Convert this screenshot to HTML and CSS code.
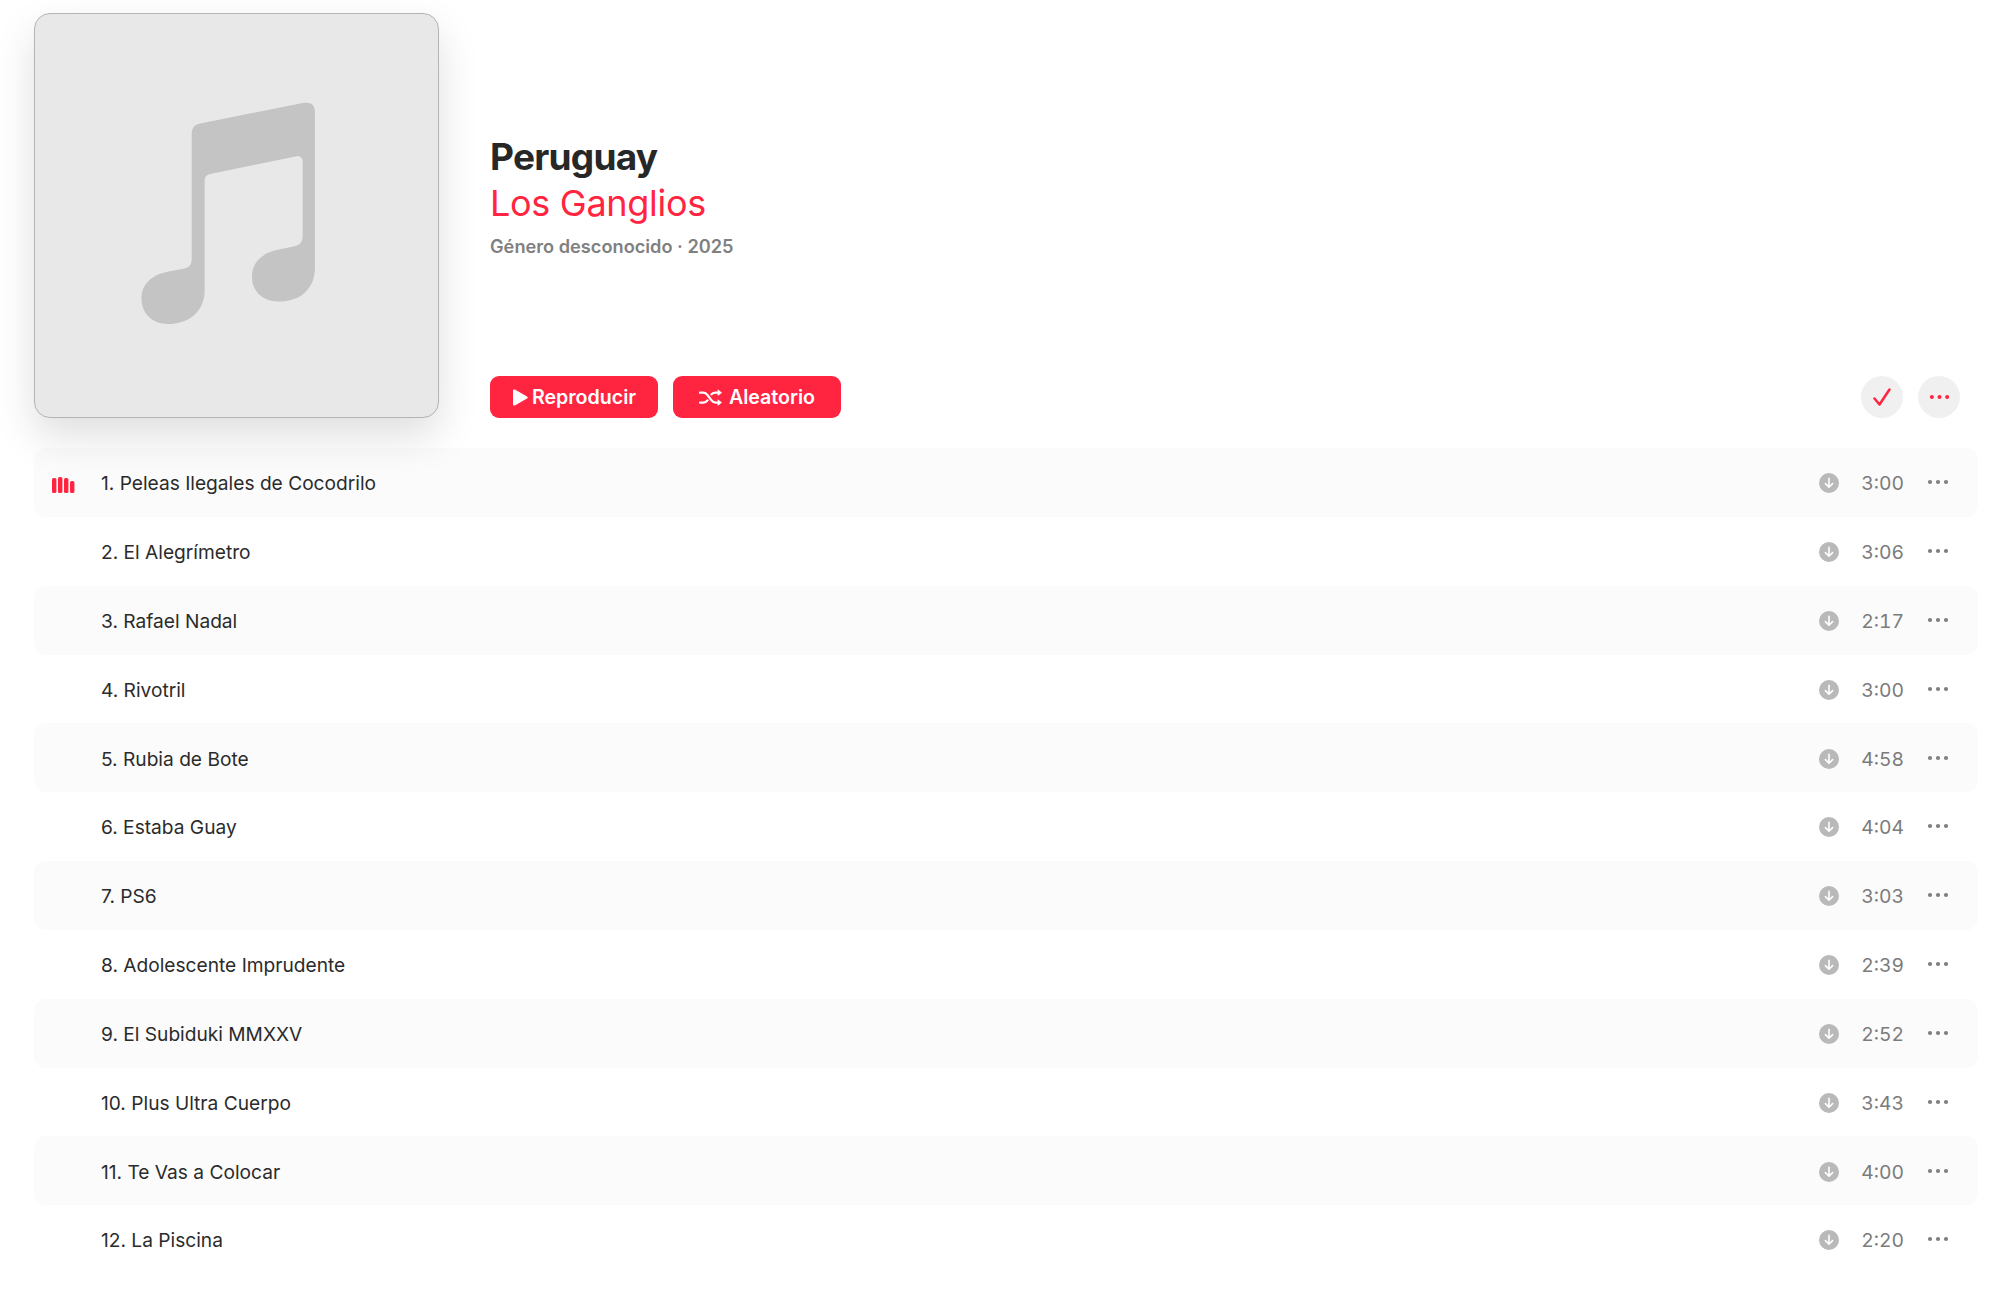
FILE: index.html
```html
<!DOCTYPE html>
<html lang="es">
<head>
<meta charset="utf-8">
<title>Peruguay</title>
<link rel="stylesheet" href="styles.css">
</head>
<body>
<svg class="defs" width="0" height="0" aria-hidden="true">
  <symbol id="dl" viewBox="0 0 20 20"><circle cx="10" cy="10" r="10" fill="#b9b9b9"/><path d="M10 5.2V14M6.4 10.6 10 14.2l3.6-3.6" fill="none" stroke="#fff" stroke-width="1.6" stroke-linecap="round" stroke-linejoin="round"/></symbol>
  <symbol id="dots" viewBox="0 0 22 6"><circle cx="3" cy="3" r="2.1"/><circle cx="11" cy="3" r="2.1"/><circle cx="19" cy="3" r="2.1"/></symbol>
</svg>
<main class="page">
  <header class="head">
    <div class="art">
      <svg class="note" viewBox="34 13 405 405"><path d="M200 123 303 102.5C311 101 315.3 104 315.3 111V268C315.3 290 300 302 279 302 262 302 252 291 252 277 252 262 263 253 278 250L295 246.5C300 245 303 242 303 236V161C303 157 300 155.5 297 156L209 174C206 175 204.5 177 204.5 180V290C204.5 312 189 324.5 167 324.5 150 324.5 141 312 141 299 141 284 152 275 167 272L183 269C189 268 191.5 265 191.5 259V133C191.5 128 194 124 200 123Z"/></svg>
    </div>
    <div class="info">
      <div class="titles">
        <h1 class="title">Peruguay</h1>
        <h2 class="artist">Los Ganglios</h2>
        <p class="meta">Género desconocido · 2025</p>
      </div>
      <div class="actions">
        <button class="btn btn-play"><svg class="ico-play" viewBox="0 0 16 17"><path d="M1 1.6C1 .6 2 .1 2.9.6L15 7.4c.9.5.9 1.7 0 2.2L2.9 16.4C2 16.9 1 16.4 1 15.4Z"/></svg>Reproducir</button>
        <button class="btn btn-shuffle"><svg class="ico-shuffle" viewBox="0 0 24 17"><path d="M1 3.5h3.5c2 0 3.2.8 4.4 2.5l4.2 5.5c1.2 1.6 2.4 2.3 4.4 2.3H20M1 13.8h3.5c2 0 3.2-.8 4.4-2.3M13.1 5.2c1.2-1.3 2.4-1.7 4.4-1.7H20" fill="none" stroke="#fff" stroke-width="2.4" stroke-linecap="round"/><path d="M19.5 0 24 3.5 19.5 7ZM19.5 10.3l4.5 3.5-4.5 3.5Z" fill="#fff"/></svg>Aleatorio</button>
        <span class="spacer"></span>
        <span class="round"><svg class="ico-check" viewBox="0 0 18 18"><path d="M1.5 10.5 6.5 16.5 16.5 1.5" fill="none" stroke="#ff2440" stroke-width="2.5" stroke-linecap="round" stroke-linejoin="round"/></svg></span>
        <span class="round round-dots"><svg class="ico-dots"><use href="#dots"/></svg></span>
      </div>
    </div>
  </header>
  <ol class="tracks">
    <li class="track"><span class="lead"><svg class="bars" viewBox="0 0 23 16"><rect x="0" y="1" width="4.4" height="15" rx="1.6"/><rect x="6" y="0" width="4.4" height="16" rx="1.6"/><rect x="12" y="1" width="4.4" height="15" rx="1.6"/><rect x="18" y="4" width="4.4" height="12" rx="1.6"/></svg></span><span class="name">1. Peleas Ilegales de Cocodrilo</span><svg class="dl"><use href="#dl"/></svg><span class="time">3:00</span><svg class="more"><use href="#dots"/></svg></li>
    <li class="track"><span class="lead"></span><span class="name">2. El Alegrímetro</span><svg class="dl"><use href="#dl"/></svg><span class="time">3:06</span><svg class="more"><use href="#dots"/></svg></li>
    <li class="track"><span class="lead"></span><span class="name">3. Rafael Nadal</span><svg class="dl"><use href="#dl"/></svg><span class="time">2:17</span><svg class="more"><use href="#dots"/></svg></li>
    <li class="track"><span class="lead"></span><span class="name">4. Rivotril</span><svg class="dl"><use href="#dl"/></svg><span class="time">3:00</span><svg class="more"><use href="#dots"/></svg></li>
    <li class="track"><span class="lead"></span><span class="name">5. Rubia de Bote</span><svg class="dl"><use href="#dl"/></svg><span class="time">4:58</span><svg class="more"><use href="#dots"/></svg></li>
    <li class="track"><span class="lead"></span><span class="name">6. Estaba Guay</span><svg class="dl"><use href="#dl"/></svg><span class="time">4:04</span><svg class="more"><use href="#dots"/></svg></li>
    <li class="track"><span class="lead"></span><span class="name">7. PS6</span><svg class="dl"><use href="#dl"/></svg><span class="time">3:03</span><svg class="more"><use href="#dots"/></svg></li>
    <li class="track"><span class="lead"></span><span class="name">8. Adolescente Imprudente</span><svg class="dl"><use href="#dl"/></svg><span class="time">2:39</span><svg class="more"><use href="#dots"/></svg></li>
    <li class="track"><span class="lead"></span><span class="name">9. El Subiduki MMXXV</span><svg class="dl"><use href="#dl"/></svg><span class="time">2:52</span><svg class="more"><use href="#dots"/></svg></li>
    <li class="track"><span class="lead"></span><span class="name">10. Plus Ultra Cuerpo</span><svg class="dl"><use href="#dl"/></svg><span class="time">3:43</span><svg class="more"><use href="#dots"/></svg></li>
    <li class="track"><span class="lead"></span><span class="name">11. Te Vas a Colocar</span><svg class="dl"><use href="#dl"/></svg><span class="time">4:00</span><svg class="more"><use href="#dots"/></svg></li>
    <li class="track"><span class="lead"></span><span class="name">12. La Piscina</span><svg class="dl"><use href="#dl"/></svg><span class="time">2:20</span><svg class="more"><use href="#dots"/></svg></li>
  </ol>
</main>
</body>
</html>
```
FILE: styles.css
```css
* { box-sizing: border-box; }
html, body { margin: 0; background: #fff; }
body { font-family: Inter, "Liberation Sans", sans-serif; color: #2b2b2b; height: 1290px; overflow: hidden; }
.defs { position: absolute; }
.page { padding: 13px 21px 0 34px; }
.head { display: flex; gap: 51px; padding-right: 18px; }
.art { flex: none; width: 405px; height: 405px; background: #e8e8e8; border: 1px solid #b4b4b4; border-radius: 16px; box-shadow: 0 18px 40px rgba(0,0,0,.13); overflow: hidden; }
.note { display: block; width: 100%; height: 100%; fill: #c4c4c4; }
.info { flex: 1; display: flex; flex-direction: column; justify-content: space-between; }
.titles { padding-top: 121px; }
.title { margin: 0; font-size: 37px; line-height: 46px; font-weight: 700; letter-spacing: -.75px; color: #272727; }
.artist { margin: 0; font-size: 36px; line-height: 46px; font-weight: 400; letter-spacing: -.3px; color: #ff2440; }
.meta { margin: 8px 0 0; font-size: 18.2px; line-height: 24px; font-weight: 600; color: #808080; }
.actions { display: flex; align-items: center; gap: 15px; }
.spacer { flex: 1; }
.btn { display: flex; align-items: center; justify-content: center; width: 168px; height: 42px; border: 0; border-radius: 9px; background: #ff2440; color: #fff; font: 600 19.6px Inter, sans-serif; padding: 0; }
.ico-play { width: 16px; height: 17px; fill: #fff; margin-right: 4px; }
.ico-shuffle { width: 23px; height: 17px; margin-right: 7px; }
.round { display: flex; align-items: center; justify-content: center; width: 42px; height: 42px; border-radius: 50%; background: #f0f0f0; }
.ico-check { width: 18px; height: 18px; }
.ico-dots { width: 21px; height: 6px; fill: #ff2440; }
.tracks { list-style: none; margin: 30px 0 0; padding: 0; }
.track { display: flex; align-items: center; height: 68.85px; padding-top: 1.5px; border-radius: 12px; font-size: 19.15px; }
.track:nth-child(odd) { background: #fbfbfb; }
.lead { flex: none; width: 67px; padding: 4px 0 0 18px; display: flex; }
.bars { width: 23px; height: 16px; fill: #ff2440; }
.name { flex: 1; color: #2b2b2b; }
.dl { flex: none; width: 20px; height: 20px; }
.time { flex: none; width: 65px; text-align: right; color: #7b7b7b; font-size: 19.3px; font-variant-numeric: tabular-nums; }
.more { flex: none; width: 22px; height: 6px; fill: #7f7f7f; margin: -2px 29px 0 23px; }
```
